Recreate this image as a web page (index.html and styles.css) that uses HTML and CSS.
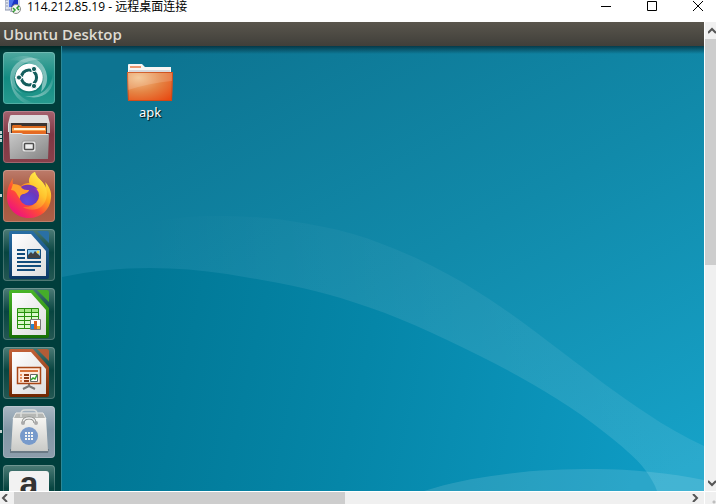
FILE: index.html
```html
<!DOCTYPE html>
<html lang="zh-CN">
<head>
<meta charset="utf-8">
<title>114.212.85.19 - 远程桌面连接</title>
<link rel="stylesheet" href="styles.css">
</head>
<body>
<div class="window">
  <header class="titlebar">
    <svg class="app-icon" width="18" height="16" viewBox="0 0 18 16" aria-hidden="true">
      <rect x="0" y="0" width="5" height="10" fill="#dfe4ee" stroke="#8b95ad"/>
      <path d="M1 3h3M1 6h3" stroke="#8b95ad"/>
      <rect x="3" y="0" width="12" height="9" fill="#cfd6ea"/>
      <rect x="4" y="0" width="9" height="7" fill="#1b35c4"/>
      <path d="M4 0h5L6 7H4z" fill="#4a72ea"/>
      <path d="M6 9h5l1 3H5z" fill="#a9b2c8"/>
      <circle cx="11" cy="9" r="4.500" fill="#f4f5f2" stroke="#8a8c88"/>
      <path d="M8 8l2 2-2 2M14 6l-2 2 2 2" fill="none" stroke="#2c9b2c" stroke-width="1.500"/>
    </svg>
    <h1 class="title">114.212.85.19 - 远程桌面连接</h1>
    <div class="controls">
      <button class="control" aria-label="Minimize"><svg width="12" height="12" viewBox="0 0 12 12"><path d="M1 6.500h10"/></svg></button>
      <button class="control" aria-label="Maximize"><svg width="12" height="12" viewBox="0 0 12 12"><path d="M1.500 1.500h9v9h-9z"/></svg></button>
      <button class="control" aria-label="Close"><svg width="12" height="12" viewBox="0 0 12 12"><path d="M1 1l10 10M11 1L1 11"/></svg></button>
    </div>
  </header>

  <div class="viewport">
    <main class="remote">
      <div class="panel">Ubuntu Desktop</div>
      <div class="session">
        <nav class="launcher" aria-label="Launcher">
          <button class="tile tile-dash" aria-label="Search">
            <svg viewBox="0 0 52 52">
              <defs>
                <linearGradient id="sw1" x1="0" y1=".3" x2="1" y2="1"><stop stop-color="#fff" stop-opacity=".4"/><stop offset="1" stop-color="#fff" stop-opacity="0"/></linearGradient>
                <linearGradient id="sw2" x1="1" y1=".4" x2="0" y2="0"><stop stop-color="#fff" stop-opacity=".45"/><stop offset="1" stop-color="#fff" stop-opacity="0"/></linearGradient>
                <linearGradient id="sw3" x1=".4" y1="1" x2="1" y2="0"><stop stop-color="#fff" stop-opacity=".4"/><stop offset="1" stop-color="#fff" stop-opacity="0"/></linearGradient>
              </defs>
              <path d="M10 17C4 28 12 46 32 51H22C10 46 4 30 10 17z" fill="url(#sw1)"/>
              <path d="M8 20C12 8 26 2 38 8C30 7 18 10 13 20C9 29 14 38 20 42C11 38 5 30 8 20z" fill="url(#sw1)"/>
              <path d="M6 8C24-2 42 8 44 24C45 32 41 37 38 40C42 26 34 8 6 8z" fill="url(#sw2)"/>
              <path d="M22 44C38 46 50 36 50 18C54 36 42 50 22 44z" fill="url(#sw3)"/>
              <circle cx="26" cy="26.500" r="14.500" fill="#07524f" opacity=".35"/>
              <circle cx="26" cy="25.500" r="13.700" fill="#fff"/>
              <circle cx="26" cy="25.500" r="7.500" fill="none" stroke="#155e5d" stroke-width="3.200"/>
              <path d="M26 25.500H12M26 25.500l7-12M26 25.500l7 12" stroke="#fff" stroke-width="1.500"/>
              <circle cx="26" cy="25.500" r="5.800" fill="#fff"/>
              <g fill="#155e5d" stroke="#fff" stroke-width="1"><circle cx="16" cy="25.500" r="2.600"/><circle cx="31" cy="17" r="2.600"/><circle cx="31" cy="34" r="2.600"/></g>
            </svg>
          </button>
          <button class="tile tile-files running-many" aria-label="Files">
            <svg viewBox="0 0 52 52">
              <defs><linearGradient id="dr" x2="1" y2="1"><stop stop-color="#c9c9c9"/><stop offset="1" stop-color="#858585"/></linearGradient></defs>
              <path d="M7 5q0-1 2-1h34q2 0 2 1l2 8v8H5v-8z" fill="#dedede"/>
              <path d="M6 12h41v10H6z" fill="#bcbcbc"/>
              <path d="M8 12h36v11H8z" fill="#3b3431"/>
              <path d="M10 14h8l1 1h24v8H9v-8z" fill="#db691d"/>
              <path d="M9 17h34v6H9z" fill="#f7a04b"/><path d="M11 17h31v2H11z" fill="#fff2d8"/>
              <path d="M9 20h34v3H9z" fill="#e56a22"/>
              <path d="M6 22h12l2 1h26l-1 25H7z" fill="url(#dr)"/>
              <path d="M7 22.500h11l2 1h25" fill="none" stroke="#e5e5e5"/>
              <rect x="19" y="30" width="14" height="11" rx="2" fill="#e3e3e3" stroke="#999"/>
              <rect x="21.500" y="32.500" width="9" height="6" rx="1" fill="#eee" stroke="#4d4d4d" stroke-width="1.500"/>
            </svg>
          </button>
          <button class="tile tile-firefox running" aria-label="Firefox">
            <svg viewBox="0 0 52 52">
              <defs>
                <linearGradient id="fx" x1=".85" y1=".1" x2=".2" y2=".9"><stop stop-color="#fff044"/><stop offset=".35" stop-color="#ffa51e"/><stop offset=".65" stop-color="#ff4b36"/><stop offset="1" stop-color="#f0157a"/></linearGradient>
                <radialGradient id="pu" cx=".4" cy=".8" r=".9"><stop stop-color="#5d4be0"/><stop offset=".6" stop-color="#6938be"/><stop offset="1" stop-color="#a72ac0"/></radialGradient>
                <linearGradient id="fl" x1=".8" y1="0" x2=".3" y2="1"><stop stop-color="#fff451"/><stop offset=".5" stop-color="#ffc32e"/><stop offset="1" stop-color="#ff6a30"/></linearGradient>
              </defs>
              <path d="M10 8C9 12 10 14 11 16C13 14 15 15 18 16C22 13 24 13 27 13C25 9 28 4 32 2C33 7 37 9 40 13C42 15 42 17 42 18C43 16 43 14 42 12C46 16 49 22 48 28C47 40 38 48 26 48C13 48 4 38 4 27C4 19 6 14 10 8z" fill="url(#fx)"/>
              <path d="M32 2C33 7 37 9 40 13C46 20 45 31 38 37C34 40 26 41 20 37C31 38 38 30 36 23C34 17 25 16 26 10C27 5 29 3 32 2z" fill="url(#fl)"/>
              <circle cx="26" cy="25.500" r="10" fill="url(#pu)"/>
              <path d="M17 18C21 13 30 14 35 19C32 18 30 18 29 19C33 20 36 24 35 28C31 21 25 21 21 24z" fill="#7538b5"/>
              <path d="M10 14C13 14 16 15 18 17C20 20 23 20 26 20C26 22 22 24 20 24C17 25 17 27 17 29C14 25 13 20 8 20z" fill="#ffa02b"/>
            </svg>
          </button>
          <button class="tile tile-office" aria-label="LibreOffice Writer">
            <svg viewBox="0 0 52 52">
              <defs><linearGradient id="bw" x2="0" y2="1"><stop stop-color="#286fa5"/><stop offset="1" stop-color="#0b3763"/></linearGradient><linearGradient id="pp" x2="1" y2="1"><stop stop-color="#fff"/><stop offset="1" stop-color="#dddddd"/></linearGradient></defs>
              <path d="M8 2h22l16 18v28q0 2-2 2H8q-2 0-2-2V4q0-2 2-2z" fill="url(#bw)"/><path d="M34 2h10q2 0 2 2v10z" fill="#2a70a5"/>
              <path d="M9 5h19l15 17v25H9z" fill="url(#pp)"/>
              <path d="M14 21h8M14 25h8M14 29h8M14 33h24M14 37h24M14 41h18" stroke="#124c7b" stroke-width="2"/>
              <path d="M24.500 20.500h13v9h-13z" fill="#82c5ee" stroke="#124c7b"/><path d="M25 29v-3l3-3 2 2 2-3 5 5v2z" fill="#414243"/><circle cx="35" cy="23" r="1.500" fill="#f8d044"/>
            </svg>
          </button>
          <button class="tile tile-office" aria-label="LibreOffice Calc">
            <svg viewBox="0 0 52 52">
              <defs><linearGradient id="bc" x2="0" y2="1"><stop stop-color="#49b527"/><stop offset="1" stop-color="#176f05"/></linearGradient></defs>
              <path d="M8 2h22l16 18v28q0 2-2 2H8q-2 0-2-2V4q0-2 2-2z" fill="url(#bc)"/><path d="M34 2h10q2 0 2 2v10z" fill="#45ad2a"/>
              <path d="M9 5h19l15 17v25H9z" fill="url(#pp)"/>
              <path d="M14.500 20.500h21v20h-21z" fill="#dcf8cd" stroke="#27900d"/><path d="M15 21h20v3H15z" fill="#a3e784"/><path d="M15 24.500h20M15 28.500h20M15 32.500h20M15 36.500h20M21.500 21v19M28.500 21v19" stroke="#27900d"/>
              <path d="M27.500 31.500h10v10h-10z" fill="#fff" stroke="#777"/><path d="M28 36h3v5h-3z" fill="#2588cf"/><path d="M31 33h3v8h-3z" fill="#d95f1f"/><path d="M34 38h3v3h-3z" fill="#e9b531"/>
            </svg>
          </button>
          <button class="tile tile-office" aria-label="LibreOffice Impress">
            <svg viewBox="0 0 52 52">
              <defs><linearGradient id="bi" x2="0" y2="1"><stop stop-color="#c26138"/><stop offset="1" stop-color="#702600"/></linearGradient></defs>
              <path d="M8 2h22l16 18v28q0 2-2 2H8q-2 0-2-2V4q0-2 2-2z" fill="url(#bi)"/><path d="M34 2h10q2 0 2 2v10z" fill="#b25c36"/>
              <path d="M9 5h19l15 17v25H9z" fill="url(#pp)"/>
              <path d="M26 37v3M26 39l-6 3M26 39l6 3" stroke="#777" stroke-width="2"/>
              <path d="M14.500 20.500h23v16h-23z" fill="#ffe9da" stroke="#a84615" stroke-width="1.500"/><path d="M17 24h18" stroke="#d77137" stroke-width="2"/>
              <path d="M17 28h2M17 31h2M17 34h2" stroke="#e79260" stroke-width="2"/><path d="M21 28h5M21 31h5M21 34h5" stroke="#8e3a14" stroke-width="2"/>
              <path d="M27.500 27.500h7v7h-7z" fill="#fff" stroke="#666"/><path d="M28 33l2-2 2 1 2-4" fill="none" stroke="#36a62b" stroke-width="1.500"/>
            </svg>
          </button>
          <button class="tile tile-software running" aria-label="Ubuntu Software">
            <svg viewBox="0 0 52 52">
              <defs><linearGradient id="bag" x2="0" y2="1"><stop stop-color="#f5f5f2"/><stop offset="1" stop-color="#c9cac7"/></linearGradient></defs>
              <path d="M7 43h39l-1 4H7z" fill="#56646d" opacity=".6"/>
              <path d="M10 13l3-6h27l3 6z" fill="#b5b7b4" stroke="#eeeeea"/>
              <path d="M10 12h33l2 33H8z" fill="url(#bag)"/>
              <path d="M18 11V8q0-4 4-4h8q4 0 4 4v3" fill="none" stroke="#dcdedb" stroke-width="1.500"/>
              <path d="M20 17q0-5 6-5t6 5" fill="none" stroke="#838783" stroke-width="3"/><path d="M20 17q0-5 6-5t6 5" fill="none" stroke="#eee" stroke-width="1.500"/>
              <circle cx="20" cy="17" r="2" fill="#aaa"/><circle cx="33" cy="17" r="2" fill="#aaa"/>
              <circle cx="26" cy="30" r="9" fill="#779acb"/>
              <path d="M22 27h8M22 30h8M22 33h8" stroke="#f4f5f4" stroke-width="2" stroke-dasharray="2 1"/>
            </svg>
          </button>
          <button class="tile tile-office" aria-label="Amazon">
            <svg viewBox="0 0 52 52">
              <rect x="6" y="6" width="40" height="40" rx="3" fill="#f2f2f2"/>
              <text class="amazon" x="26" y="30" text-anchor="middle">a</text>
            </svg>
          </button>
        </nav>
        <section class="desktop">
          <svg class="wallpaper" viewBox="62 46 642 445" preserveAspectRatio="none" aria-hidden="true">
            <defs>
              <linearGradient id="sky" gradientUnits="userSpaceOnUse" x1="150" y1="60" x2="450" y2="600"><stop stop-color="#0d7491"/><stop offset=".5" stop-color="#118aaa"/><stop offset="1" stop-color="#16a2c8"/></linearGradient>
              <linearGradient id="sea" gradientUnits="userSpaceOnUse" x1="80" y1="330" x2="640" y2="450"><stop stop-color="#007491"/><stop offset=".5" stop-color="#0586a8"/><stop offset="1" stop-color="#0e9ac2"/></linearGradient>
              <linearGradient id="band" gradientUnits="userSpaceOnUse" x1="140" y1="0" x2="704" y2="0"><stop stop-color="#fff" stop-opacity="0"/><stop offset=".4" stop-color="#fff" stop-opacity=".04"/><stop offset="1" stop-color="#fff" stop-opacity=".09"/></linearGradient>
            </defs>
            <path fill="url(#sky)" d="M62 46H704V491H62z"/>
            <path fill="url(#band)" d="M62 250C120 225 170 216 215 216C240 216 265 217 290 221C311 224 332 228 353 234C374 240 395 249 416 258C437 268 458 279 478 292C506 309 534 331 562 352C590 373 618 395 646 413C665 426 685 437 704 446V491H62z"/>
            <path fill="url(#sea)" d="M62 277C90 271 120 268 150 268C176 268 201 270 227 274C269 281 311 288 353 302C395 315 436 334 478 355C520 376 565 401 604 432C620 445 636 457 646 471C651 478 655 485 657 491H62z"/>
            <path fill="#fff" fill-opacity=".12" d="M424 491C449 483 474 478 499 475C531 470 563 469 596 469C633 469 669 473 704 480V491z"/>
          </svg>
          <a class="folder" href="#apk">
            <svg width="48" height="40" viewBox="0 0 48 40" aria-hidden="true">
              <defs><radialGradient id="fo" cx=".25" cy=".2" r="1"><stop stop-color="#f2c18a"/><stop offset=".5" stop-color="#e58444"/><stop offset="1" stop-color="#e84a12"/></radialGradient></defs>
              <path d="M2 14V2q0-1 1-1h13l3 3h26v10z" fill="#f8f5f3"/><path d="M4 3h11v2H4z" fill="#ed9871"/><path d="M3 7h41v2H3z" fill="#d8d9dc"/>
              <path d="M1 9h46l-1 29H2z" fill="url(#fo)"/><path d="M1.500 9.500h45l-1 28h-43z" fill="none" stroke="#c84516" stroke-opacity=".7"/>
              <path d="M2 10h44v8Q24 20 2 27z" fill="#fff" opacity=".15"/>
            </svg>
            <span>apk</span>
          </a>
        </section>
      </div>
    </main>

    <div class="scroll-v">
      <button class="arrow arrow-v" aria-label="Scroll up"><svg width="8" height="8" viewBox="0 0 8 8"><path d="M0 6l4-4 4 4"/></svg></button>
      <div class="track track-v"><div class="thumb"></div></div>
      <button class="arrow arrow-v" aria-label="Scroll down"><svg width="8" height="8" viewBox="0 0 8 8"><path d="M0 2l4 4 4-4"/></svg></button>
    </div>
    <div class="scroll-h">
      <button class="arrow arrow-h" aria-label="Scroll left"><svg width="8" height="8" viewBox="0 0 8 8"><path d="M6 0L2 4l4 4"/></svg></button>
      <div class="track track-h"><div class="thumb"></div></div>
      <button class="arrow arrow-h" aria-label="Scroll right"><svg width="8" height="8" viewBox="0 0 8 8"><path d="M2 0l4 4-4 4"/></svg></button>
    </div>
    <div class="grip"></div>
  </div>
</div>
</body>
</html>
```
FILE: styles.css
```css
* {
  box-sizing: border-box;
}

body {
  margin: 0;
  font-family: "Open Sans", "Noto Sans CJK SC", sans-serif;
}

button {
  padding: 0;
  border: 0;
  background: none;
}

svg {
  display: block;
}

.window {
  display: flex;
  flex-direction: column;
  height: 100vh;
  overflow: hidden;
  background: #fff;
}

/* Window title bar */
.titlebar {
  display: flex;
  flex: none;
  height: 22px;
  padding-left: 5px;
  gap: 4px;
}

.title {
  flex: 1;
  margin: 0;
  font-size: 12px;
  font-weight: 400;
  line-height: 14px;
  color: #000;
}

.controls {
  display: flex;
  gap: 34px;
  padding-right: 12px;
}

.control {
  height: 12px;
}

.control path {
  fill: none;
  stroke: #000;
}

/* Remote screen and its scrollbars */
.viewport {
  display: grid;
  flex: 1;
  grid-template-columns: minmax(0, 1fr) 11px;
  grid-template-rows: minmax(0, 1fr) 12px;
  gap: 1px;
  min-height: 0;
}

.remote {
  display: flex;
  flex-direction: column;
  min-height: 0;
}

.panel {
  flex: none;
  height: 24px;
  padding-left: 3px;
  background: linear-gradient(#5a564d, #403f3a);
  color: #dfdbd2;
  font-size: 15px;
  font-weight: 600;
  line-height: 24px;
}

.session {
  display: flex;
  flex: 1;
  min-height: 0;
}

/* Launcher */
.launcher {
  display: flex;
  flex: none;
  flex-direction: column;
  gap: 7px;
  width: 62px;
  padding: 6px 6px 0 3px;
  overflow: hidden;
  border-right: 1px solid #2b8797;
  background: #003e3c;
  box-shadow: inset 0 6px 5px -4px #00201f;
}

.tile {
  position: relative;
  flex: none;
  width: 52px;
  height: 52px;
  border-radius: 4px;
  box-shadow: inset 0 0 0 1px rgba(255, 255, 255, 0.2);
}

.tile-dash {
  background: linear-gradient(#4fa9a0, #128c82 50%, #269a8e);
}

.tile-files {
  background: linear-gradient(#a5636f, #803744 45%, #88404a);
}

.tile-firefox {
  background: linear-gradient(#bd7c6b, #a3543c 45%, #ad6047);
}

.tile-office {
  background: linear-gradient(#4d7c77, #074541 45%, #245853);
}

.tile-software {
  background: linear-gradient(#aab8c4, #8297a6 45%, #8d9dab);
}

.running::before,
.running-many::before {
  content: "";
  position: absolute;
  top: 24px;
  left: -3px;
  width: 2px;
  height: 3px;
  background: #c3d1d0;
}

.running-many::before {
  top: 20px;
  height: 11px;
  background: repeating-linear-gradient(#c3d1d0 0 3px, transparent 3px 4px);
}

.amazon {
  fill: #333;
  font: bold 34px "Liberation Sans", sans-serif;
}

/* Desktop */
.desktop {
  position: relative;
  flex: 1;
  padding: 17px 64px;
  overflow: hidden;
}

.desktop::before {
  content: "";
  position: absolute;
  inset: 0 0 auto;
  z-index: 1;
  height: 8px;
  background: linear-gradient(rgba(0, 30, 40, 0.7), transparent);
}

.wallpaper {
  position: absolute;
  inset: 0;
  width: 100%;
  height: 100%;
}

.folder {
  position: relative;
  display: inline-flex;
  flex-direction: column;
  align-items: center;
  color: #fff;
  font-family: "Noto Sans", sans-serif;
  font-size: 13px;
  line-height: 18px;
  text-decoration: none;
  text-shadow: 1px 1px 1px #000;
}

/* Scrollbars */
.scroll-v,
.scroll-h {
  display: flex;
  min-width: 0;
  overflow: hidden;
  background: #f0f0f0;
}

.scroll-v {
  flex-direction: column;
}

.arrow {
  display: flex;
  flex: none;
  align-items: center;
  justify-content: center;
}

.arrow-v {
  height: 17px;
  justify-content: flex-end;
}

.arrow-h {
  width: 14px;
  padding-right: 4px;
}

.arrow path {
  fill: none;
  stroke: #555;
  stroke-width: 2;
}

.track {
  display: flex;
  flex: 1;
}

.track-v {
  flex-direction: column;
}

.thumb {
  background: #cdcdcd;
}

.track-v .thumb {
  height: 52%;
}

.track-h .thumb {
  width: 49%;
}

.grip {
  background: radial-gradient(circle at 9px 10px, #bfbfbf 1px, transparent 2px) #f0f0f0;
}
```
